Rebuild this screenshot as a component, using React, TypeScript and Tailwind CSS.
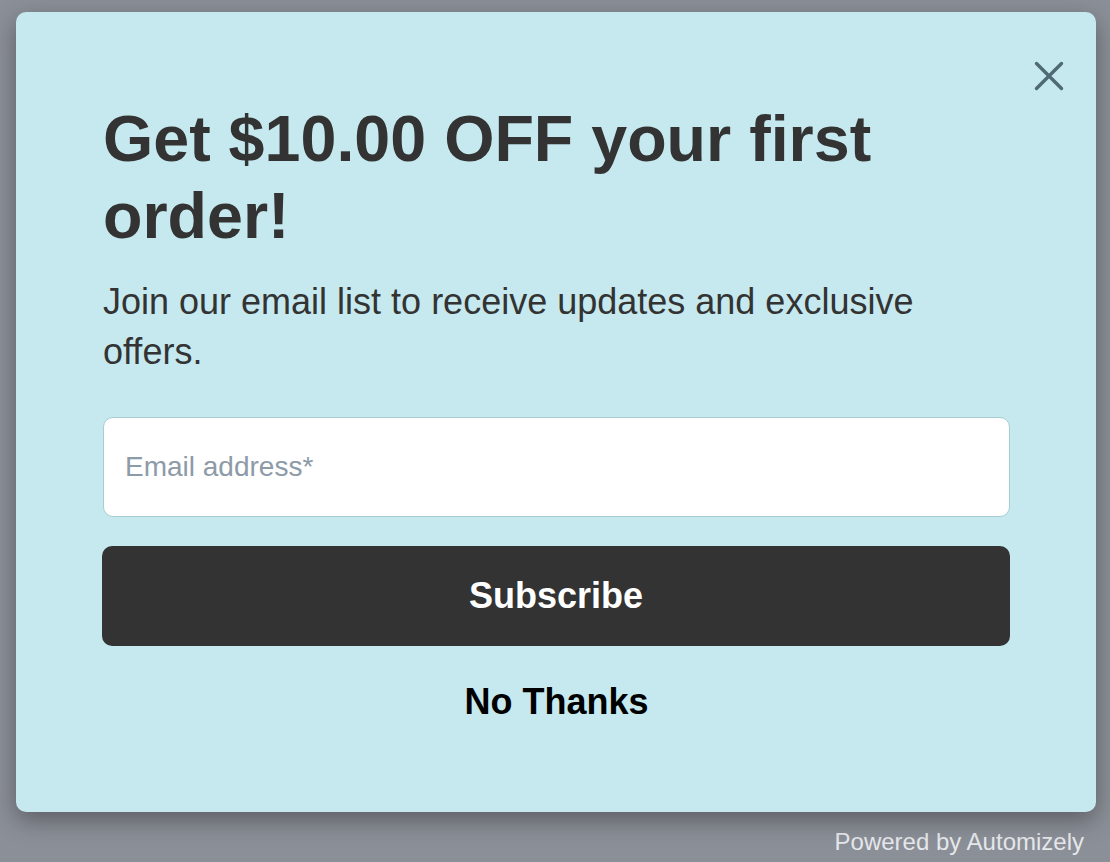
import React from "react";

export default function App() {
  return (
    <div
      className="w-[1110px] h-[862px] bg-[#8b8f97] pt-[12px] overflow-hidden"
      style={{ fontFamily: '"Liberation Sans", Arial, sans-serif' }}
    >
      <div className="relative ml-[16px] w-[1080px] h-[800px] rounded-[10px] bg-[#c5e9ee] shadow-[0_8px_24px_rgba(0,0,0,0.35)] pt-[89px] pl-[87px] pr-[86px]">
        <button className="absolute top-[48px] right-[31px] w-[32px] h-[32px] flex items-center justify-center">
          <svg width="32" height="32" viewBox="0 0 32 32" fill="none">
            <path d="M3.5 3.5L28.5 28.5M28.5 3.5L3.5 28.5" stroke="#4f6a74" strokeWidth="3.4" strokeLinecap="round" />
          </svg>
        </button>
        <h1 className="text-[64.6px] leading-[76.8px] font-bold text-[#333333] m-0">
          Get $10.00 OFF your first order!
        </h1>
        <p className="mt-[22px] text-[36px] leading-[50px] text-[#333333] pr-[80px]">
          Join our email list to receive updates and exclusive offers.
        </p>
        <div className="mt-[40px] h-[100px] w-[907px] rounded-[10px] border border-[#a7cdd4] bg-white flex items-center px-[21px]">
          <span className="text-[28px] text-[#8d9ba8]">Email address*</span>
        </div>
        <button className="mt-[29px] h-[100px] w-[908px] -ml-[1px] rounded-[10px] bg-[#333333] text-white text-[36px] font-bold flex items-center justify-center">
          Subscribe
        </button>
        <div className="mt-[36px] h-[40px] flex items-center justify-center text-[36px] font-bold text-black">
          No Thanks
        </div>
      </div>
      <div className="mt-[16px] pr-[26px] text-right text-[24px] leading-[28px] text-[#e6e8ec]">
        Powered by Automizely
      </div>
    </div>
  );
}
